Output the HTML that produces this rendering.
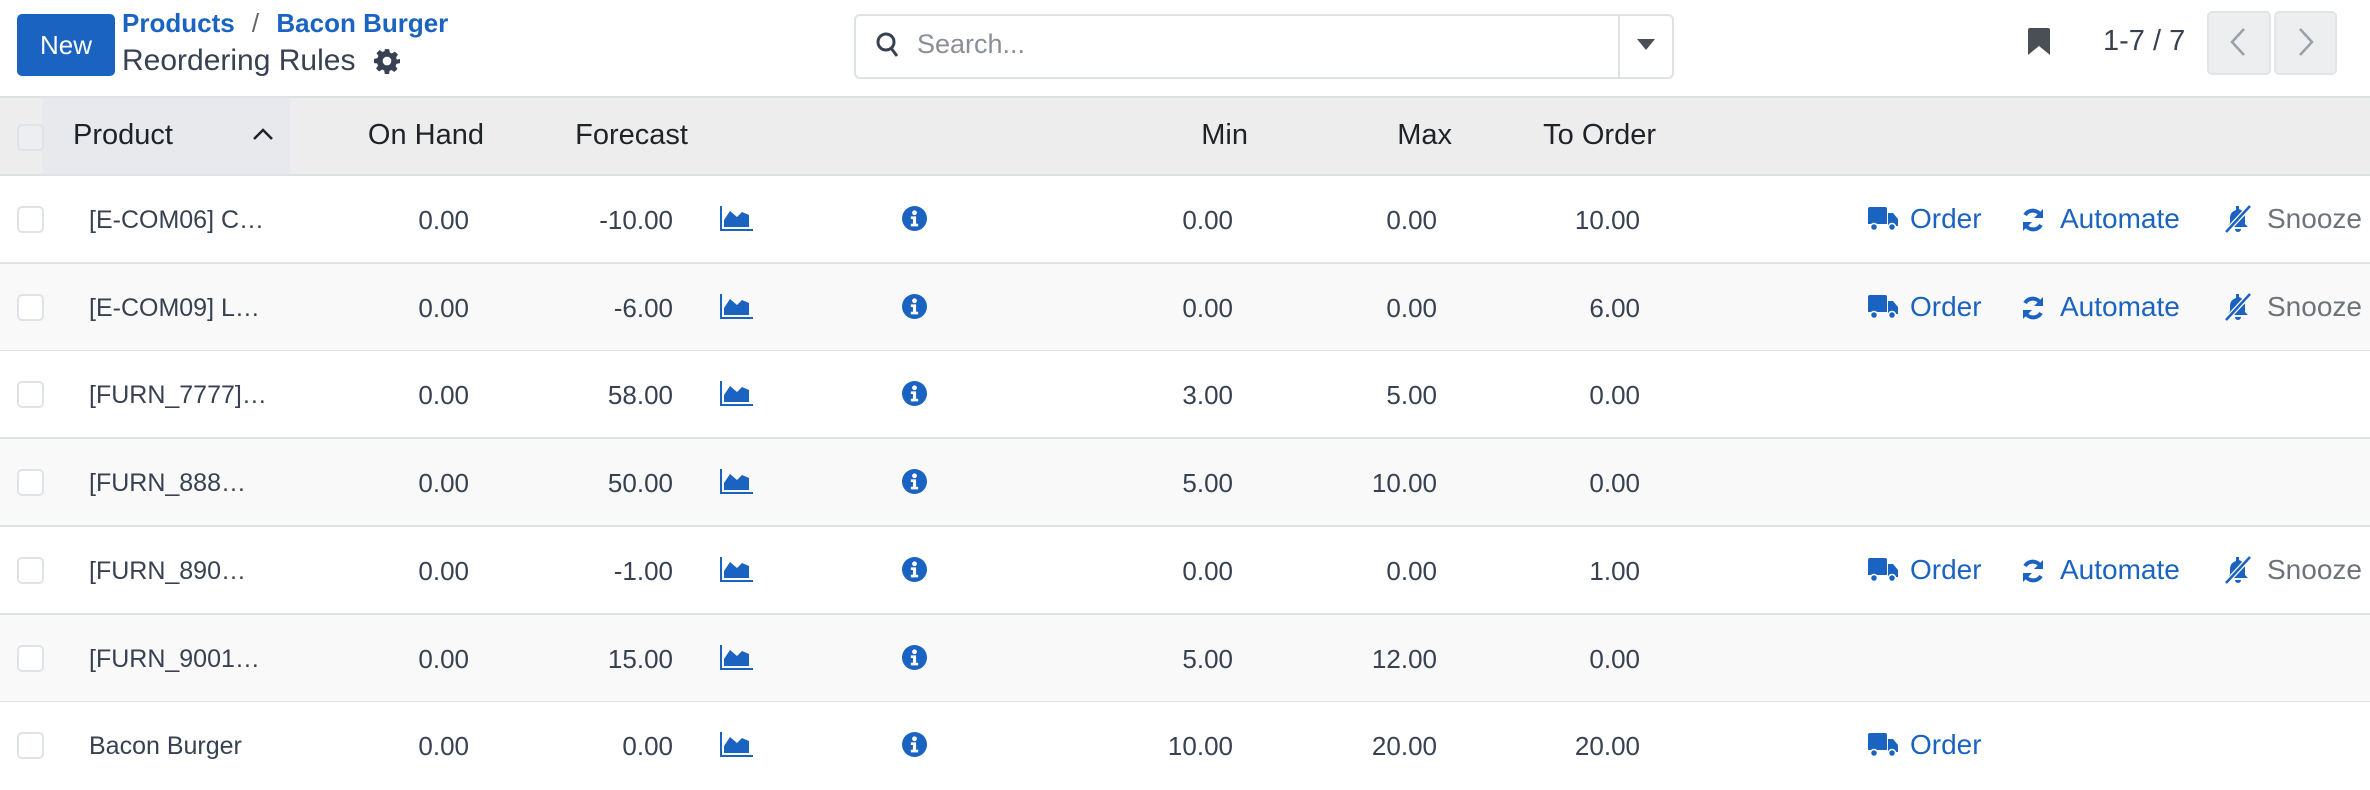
<!DOCTYPE html>
<html><head><meta charset="utf-8"><style>
*{margin:0;padding:0;box-sizing:border-box}
body{width:2370px;height:786px;overflow:hidden;background:#fff;font-family:"Liberation Sans",sans-serif;color:#374151;position:relative}
.a{position:absolute;white-space:nowrap}
.r{position:absolute;white-space:nowrap;text-align:right}
.blue{color:#1b63c1}
.row{position:absolute;left:0;width:2370px;height:88px;border-bottom:2px solid #dee2e6}
.cb{position:absolute;left:17px;width:27px;height:27px;border:2px solid #dfe2e6;border-radius:5px;background:#fff}
.t{font-size:26px;line-height:30px}
.h{font-size:29px;color:#1f2328}
</style></head><body>
<div class="a" style="left:17px;top:14px;width:98px;height:62px;background:#1b63c1;border-radius:5px;color:#fff;font-size:26px;line-height:62px;text-align:center">New</div>
<div class="a blue" style="left:122px;top:8px;font-size:26px;font-weight:bold;line-height:30px">Products <span style="color:#666;font-weight:normal;margin:0 10px">/</span> Bacon Burger</div>
<div class="a" style="left:122px;top:44px;font-size:30px;line-height:34px;color:#374151">Reordering Rules</div>
<svg class="a" style="left:374px;top:48px" width="26" height="26" viewBox="0 0 24 24"><path fill="#374151" d="M10 1h4l.6 3.2 2 .9 2.7-1.8 2.8 2.8-1.8 2.7.9 2L24 10v4l-3.2.6-.9 2 1.8 2.7-2.8 2.8-2.7-1.8-2 .9L14 24h-4l-.6-3.2-2-.9-2.7 1.8-2.8-2.8 1.8-2.7-.9-2L0 14v-4l3.2-.6.9-2L2.3 4.7l2.8-2.8 2.7 1.8 2-.9z"/><circle cx="12" cy="12" r="4" fill="#fff"/></svg>
<div class="a" style="left:854px;top:14px;width:820px;height:65px;border:2px solid #dee2e6;border-radius:6px"></div>
<div class="a" style="left:1618px;top:15px;width:2px;height:63px;background:#dee2e6"></div>
<svg class="a" style="left:876px;top:32px" width="24" height="28" viewBox="0 0 24 28"><circle cx="10" cy="10" r="8" fill="none" stroke="#374151" stroke-width="3"/><path d="M15 16l6 8" stroke="#374151" stroke-width="3"/></svg>
<div class="a" style="left:917px;top:29px;font-size:27px;line-height:30px;color:#8a8f96">Search...</div>
<svg class="a" style="left:1637px;top:39px" width="18" height="12"><path d="M0 0h18l-9 11z" fill="#4a4f55"/></svg>
<svg class="a" style="left:2028px;top:28px" width="22" height="27"><path d="M0 2q0-2 2-2h18q2 0 2 2v25l-11-9-11 9z" fill="#4a4f55"/></svg>
<div class="a" style="left:2103px;top:25px;font-size:29px;line-height:32px;color:#374151">1-7 / 7</div>
<div class="a" style="left:2207px;top:11px;width:64px;height:64px;background:#eceef0;border:2px solid #e2e4e7;border-radius:5px"></div>
<div class="a" style="left:2274px;top:11px;width:63px;height:64px;background:#eceef0;border:2px solid #e2e4e7;border-radius:5px"></div>
<svg class="a" style="left:2230px;top:28px" width="16" height="28"><path d="M14 1L2 14l12 13" fill="none" stroke="#9aa0a6" stroke-width="2.5"/></svg>
<svg class="a" style="left:2298px;top:28px" width="16" height="28"><path d="M2 1l12 13L2 27" fill="none" stroke="#9aa0a6" stroke-width="2.5"/></svg>
<div class="a" style="left:0;top:96px;width:2370px;height:80px;background:#ededed;border-top:2px solid #dee2e6;border-bottom:2px solid #dee2e6"></div>
<div class="a" style="left:42px;top:98px;width:248px;height:76px;background:#e7e9ec"></div>
<div class="cb" style="top:124px;background:#eceef0"></div>
<div class="a t h" style="left:73px;top:120px">Product</div>
<svg class="a" style="left:252px;top:127px" width="22" height="14"><path d="M2 12L11 3l9 9" fill="none" stroke="#1f2328" stroke-width="2.5"/></svg>
<div class="r t h" style="right:1886px;top:120px">On Hand</div>
<div class="r t h" style="right:1682px;top:120px">Forecast</div>
<div class="r t h" style="right:1122px;top:120px">Min</div>
<div class="r t h" style="right:918px;top:120px">Max</div>
<div class="r t h" style="right:714px;top:120px">To Order</div>
<div id="rows"></div>
<script>
(function(){
var d=[["[E-COM06] C…","0.00","-10.00","0.00","0.00","10.00",3],["[E-COM09] L…","0.00","-6.00","0.00","0.00","6.00",3],["[FURN_7777]…","0.00","58.00","3.00","5.00","0.00",0],["[FURN_888…","0.00","50.00","5.00","10.00","0.00",0],["[FURN_890…","0.00","-1.00","0.00","0.00","1.00",3],["[FURN_9001…","0.00","15.00","5.00","12.00","0.00",0],["Bacon Burger","0.00","0.00","10.00","20.00","20.00",1]];
var h="";
var truck='<svg width="30" height="24" viewBox="0 0 30 24"><path d="M0 2q0-2 2-2h15q2 0 2 2v15H0z M20 6h5l5 6v7H20z" fill="#1b63c1"/><circle cx="6" cy="20" r="3.5" fill="#1b63c1" stroke="#fff" stroke-width="1.5"/><circle cx="24" cy="20" r="3.5" fill="#1b63c1" stroke="#fff" stroke-width="1.5"/></svg>';
var sync='<svg width="26" height="26" viewBox="0 0 26 26"><path d="M21 9A9 9 0 0 0 5 8" fill="none" stroke="#1b63c1" stroke-width="4"/><path d="M23 2v9h-9z" fill="#1b63c1"/><path d="M5 17a9 9 0 0 0 16 1" fill="none" stroke="#1b63c1" stroke-width="4"/><path d="M3 24v-9h9z" fill="#1b63c1"/></svg>';
var bell='<svg width="30" height="30" viewBox="0 0 30 30"><path d="M13 2h3v3q6 2 6 9v6l3 3H6l-2 1 3-5v-5q0-6 6-8z" fill="#1b63c1"/><path d="M12 25a3 3 0 0 0 6 0" fill="#1b63c1"/><path d="M27 2L3 28" stroke="#fff" stroke-width="5"/><path d="M27 2L3 28" stroke="#1b63c1" stroke-width="2.5"/></svg>';
for(var i=0;i<7;i++){var r=d[i],ty=Math.round(176+i*87.7),bg=(i%2==1)?"#f9f9f9":"#fff";
h+='<div class="row" style="top:'+ty+'px;background:'+bg+';'+(i==6?'border-bottom:none':'')+'">';
h+='<div class="cb" style="top:30px"></div>';
h+='<div class="a t" style="left:89px;top:29px;font-size:25px">'+r[0]+'</div>';
h+='<div class="r t" style="right:1901px;top:29px">'+r[1]+'</div>';
h+='<div class="r t" style="right:1697px;top:29px">'+r[2]+'</div>';
h+='<svg class="a" style="left:720px;top:30px" width="33" height="25" viewBox="0 0 33 25"><path d="M1 0v24h32" fill="none" stroke="#1b63c1" stroke-width="2"/><path d="M4 21V14l6-9 7 6 5-5 7 3v12z" fill="#1b63c1"/></svg>';
h+='<svg class="a" style="left:902px;top:30px" width="25" height="25" viewBox="0 0 24 24"><circle cx="12" cy="12" r="12" fill="#1b63c1"/><circle cx="12" cy="6.5" r="2.3" fill="#fff"/><path d="M8.5 10h5v7h2v2.5h-7V17h2v-4.5h-2z" fill="#fff"/></svg>';
h+='<div class="r t" style="right:1137px;top:29px">'+r[3]+'</div>';
h+='<div class="r t" style="right:933px;top:29px">'+r[4]+'</div>';
h+='<div class="r t" style="right:730px;top:29px">'+r[5]+'</div>';
if(r[6]>=1){h+='<div class="a" style="left:1868px;top:31px">'+truck+'</div><div class="a t blue" style="left:1910px;top:28px;font-size:28px">Order</div>';}
if(r[6]>=3){h+='<div class="a" style="left:2020px;top:31px">'+sync+'</div><div class="a t blue" style="left:2060px;top:28px;font-size:28px">Automate</div>';
h+='<div class="a" style="left:2223px;top:28px">'+bell+'</div><div class="a t" style="left:2267px;top:28px;font-size:28px;color:#6c737a">Snooze</div>';}
h+='</div>';}
document.getElementById("rows").innerHTML=h;
})();
</script>
</body></html>
